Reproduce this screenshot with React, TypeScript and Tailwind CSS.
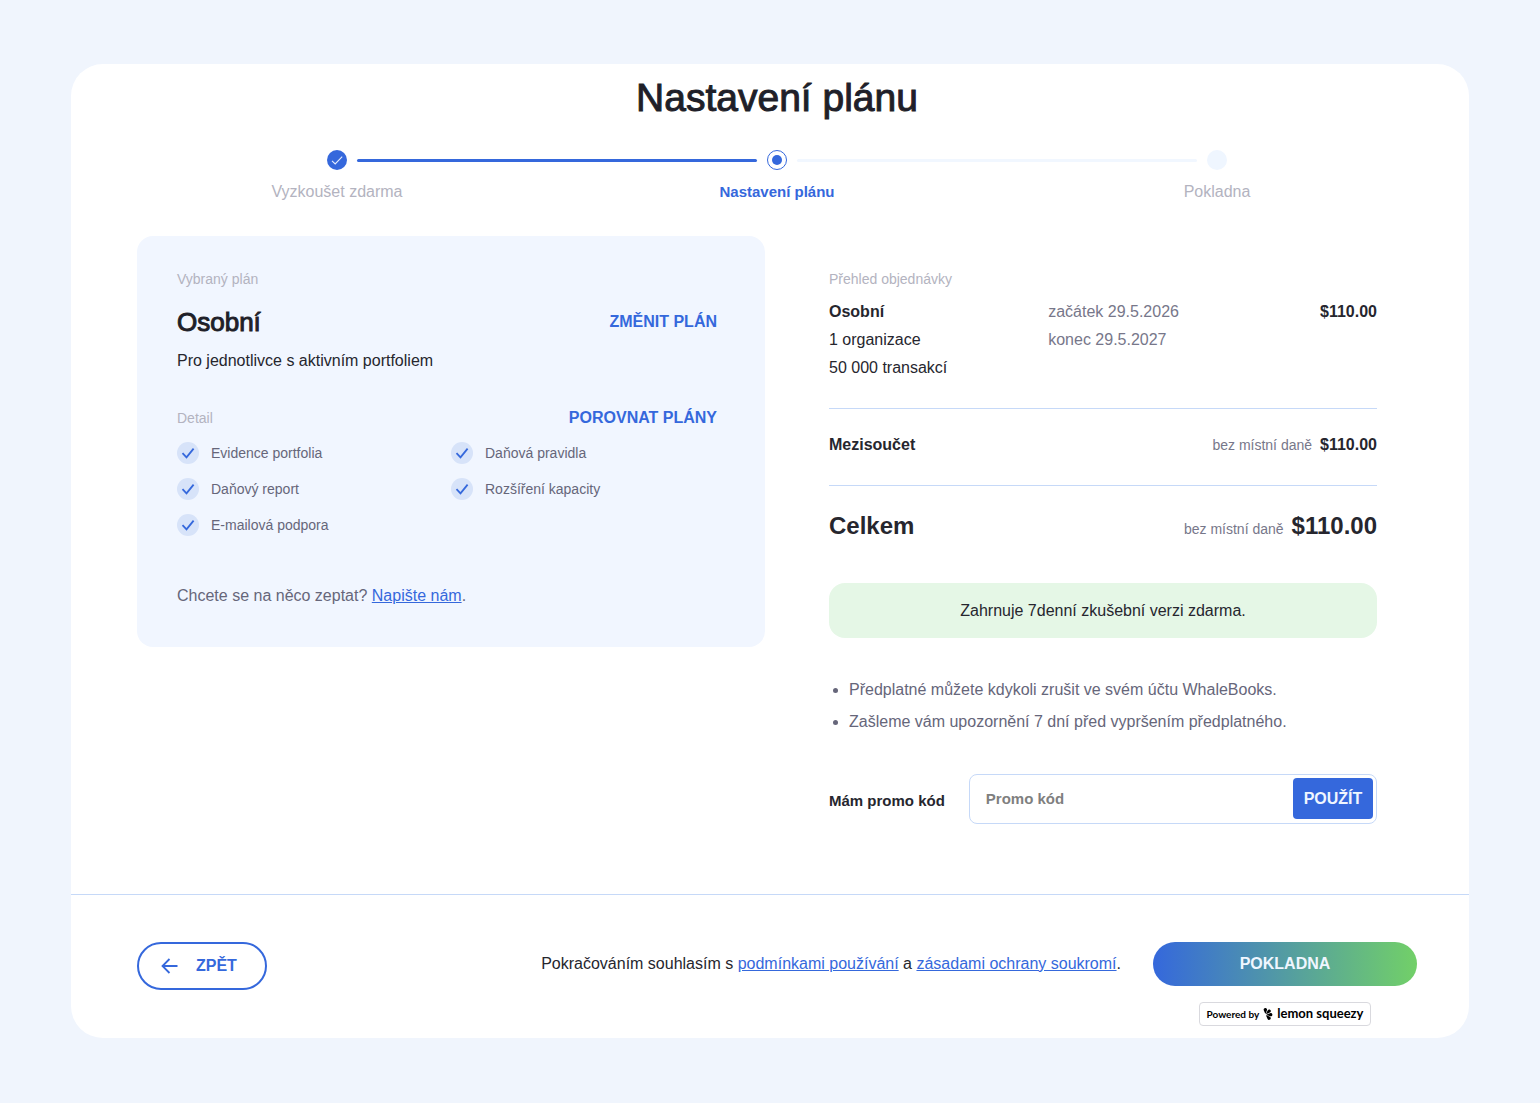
import { useState } from 'react';
import { SiLemonsqueezy } from 'react-icons/si';

const steps = [
  { label: 'Vyzkoušet zdarma', state: 'done' },
  { label: 'Nastavení plánu', state: 'active' },
  { label: 'Pokladna', state: 'next' },
];

const features = [
  'Evidence portfolia',
  'Daňová pravidla',
  'Daňový report',
  'Rozšíření kapacity',
  'E-mailová podpora',
];

function StepDot({ state }: { state: string }) {
  if (state === 'done') {
    return (
      <svg className="size-5 shrink-0" viewBox="0 0 20 20" fill="none">
        <circle cx="10" cy="10" r="10" fill="#3568dc" />
        <path d="M5 10.8l3.2 3.2L15.2 6.6" stroke="#e4ecfd" strokeWidth="1.1" />
      </svg>
    );
  }
  if (state === 'active') {
    return (
      <svg className="size-5 shrink-0" viewBox="0 0 20 20" fill="none">
        <circle cx="10" cy="10" r="9.5" fill="#fff" stroke="#3568dc" />
        <circle cx="10" cy="10" r="5" fill="#3568dc" />
      </svg>
    );
  }
  return <span className="size-5 shrink-0 rounded-full bg-[#eff6ff]" />;
}

function Stepper() {
  return (
    <ol className="-mx-5 mt-7 grid grid-cols-3">
      {steps.map((step, i) => (
        <li key={step.label} className="flex flex-col items-center">
          <div className="flex w-full items-center gap-[10px]">
            <span
              className={`h-[3px] flex-1 ${i === 0 ? '' : i === 1 ? 'rounded-r-sm bg-[#3568dc]' : 'rounded-r-sm bg-[#f1f7ff]'}`}
            />
            <StepDot state={step.state} />
            <span
              className={`h-[3px] flex-1 ${i === 0 ? 'rounded-l-sm bg-[#3568dc]' : i === 1 ? 'rounded-l-sm bg-[#f1f7ff]' : ''}`}
            />
          </div>
          <span
            className={`mt-[11px] leading-[22px] ${step.state === 'active' ? 'text-[15px] font-bold text-[#3568dc]' : 'text-[#b3b3c0]'}`}
          >
            {step.label}
          </span>
        </li>
      ))}
    </ol>
  );
}

function Feature({ text }: { text: string }) {
  return (
    <li className="flex h-[22px] items-center gap-3 text-sm text-[#66667a]">
      <svg className="size-[22px] shrink-0" viewBox="0 0 22 22" fill="none">
        <circle cx="11" cy="11" r="11" fill="#d7e3f9" />
        <path d="M5.5 11.2l4 4.2L16.6 6.6" stroke="#3568dc" strokeWidth="1.8" />
      </svg>
      {text}
    </li>
  );
}

function PlanCard() {
  return (
    <section className="rounded-2xl bg-[#f1f6ff] pt-8 pr-12 pb-10 pl-10">
      <p className="text-sm leading-[22px] text-[#b3b3c0]">Vybraný plán</p>
      <div className="mt-4 flex items-center justify-between">
        <h2 className="text-[26px] leading-8 text-[#1f1f29] [-webkit-text-stroke:1px]">Osobní</h2>
        <button className="leading-[22px] font-bold text-[#3568dc]">ZMĚNIT PLÁN</button>
      </div>
      <p className="mt-3 leading-[22px]">Pro jednotlivce s aktivním portfoliem</p>

      <div className="mt-[35px] flex items-center justify-between leading-[22px]">
        <h3 className="text-sm leading-[22px] text-[#b3b3c0]">Detail</h3>
        <button className="font-bold text-[#3568dc]">POROVNAT PLÁNY</button>
      </div>
      <ul className="mt-[13px] grid grid-cols-2 gap-x-2 gap-y-[14px]">
        {features.map((f) => (
          <Feature key={f} text={f} />
        ))}
      </ul>
      <p className="mt-[49px] leading-[22px] text-[#66667a]">
        Chcete se na něco zeptat? <a href="#kontakt" className="text-[#3568dc] underline">Napište nám</a>.
      </p>
    </section>
  );
}

function OrderSummary() {
  const [code, setCode] = useState('');

  return (
    <section className="pt-8 pr-10">
      <h2 className="text-sm leading-[22px] text-[#b3b3c0]">Přehled objednávky</h2>
      <div className="mt-2 grid grid-cols-5 border-b border-[#c6d9f8] pb-[26px] leading-7">
        <div className="col-span-2">
          <p className="font-bold">Osobní</p>
          <p>1 organizace</p>
          <p>50 000 transakcí</p>
        </div>
        <div className="col-span-2 text-[#77778a]">
          <p>začátek 29.5.2026</p>
          <p>konec 29.5.2027</p>
        </div>
        <p className="text-right font-bold">$110.00</p>
      </div>

      <div className="flex items-baseline justify-between border-b border-[#c6d9f8] pt-[22px] pb-[26px] leading-7 font-bold">
        <span>Mezisoučet</span>
        <span className="flex items-baseline gap-2">
          <span className="text-sm font-normal text-[#77778a]">bez místní daně</span>
          $110.00
        </span>
      </div>

      <div className="flex items-baseline justify-between pt-[22px] text-2xl leading-9 font-bold">
        <span>Celkem</span>
        <span className="flex items-baseline gap-2">
          <span className="text-sm font-normal text-[#77778a]">bez místní daně</span>
          $110.00
        </span>
      </div>

      <p className="mt-[39px] rounded-2xl bg-[#e5f7e6] py-4 text-center leading-[23px]">
        Zahrnuje 7denní zkušební verzi zdarma.
      </p>

      <ul className="mt-9 list-disc pl-5 leading-8 text-[#66667a]">
        <li>Předplatné můžete kdykoli zrušit ve svém účtu WhaleBooks.</li>
        <li>Zašleme vám upozornění 7 dní před vypršením předplatného.</li>
      </ul>

      <form className="mt-9 flex items-center gap-6" onSubmit={(e) => e.preventDefault()}>
        <label htmlFor="promo" className="shrink-0 pt-1 text-[15px] font-bold">
          Mám promo kód
        </label>
        <div className="flex h-[50px] min-w-0 flex-1 rounded-lg border border-[#c6d9f8] p-[3px]">
          <input
            id="promo"
            value={code}
            onChange={(e) => setCode(e.target.value)}
            placeholder="Promo kód"
            className="min-w-0 flex-1 px-[13px] text-[15px] font-bold outline-none placeholder:text-[#7f7f7f]"
          />
          <button className="h-[41px] w-20 rounded bg-[#3568dc] font-bold text-[#eff6ff]">POUŽÍT</button>
        </div>
      </form>
    </section>
  );
}

function Footer() {
  return (
    <footer className="mt-[70px] border-t border-[#c6d9f8] pt-[47px] pr-[52px] pb-3 pl-[66px]">
      <div className="mx-auto flex max-w-[1280px] items-start justify-between">
        <button className="flex h-12 w-[130px] items-center gap-[18px] rounded-full border-2 border-[#3568dc] pl-[22px] font-bold text-[#3568dc]">
          <svg className="h-4 w-[17px]" viewBox="0 0 17 16" fill="none" stroke="currentColor" strokeWidth="1.8">
            <path d="M16.5 8H1.5M8.5 1L1.5 8l7 7" />
          </svg>
          ZPĚT
        </button>
        <div className="flex items-start gap-8">
          <p className="leading-[44px]">
            Pokračováním souhlasím s <a href="#podminky" className="text-[#3568dc] underline">podmínkami používání</a> a{' '}
            <a href="#soukromi" className="text-[#3568dc] underline">zásadami ochrany soukromí</a>.
          </p>
          <div className="flex w-[264px] shrink-0 flex-col items-center gap-4">
            <button className="h-11 w-full rounded-full bg-linear-to-r/srgb from-[#3568dc] to-[#72d068] font-bold text-[#eff6ff]">
              POKLADNA
            </button>
            <a
              href="#lemon-squeezy"
              className="flex h-6 w-[172px] items-center justify-center rounded border border-[#d9d9de] font-[Lato,sans-serif] font-bold whitespace-nowrap text-black"
            >
              <span className="text-[10px]">Powered by</span>
              <SiLemonsqueezy className="mx-[3px] size-3" />
              <span className="text-[13px]">lemon squeezy</span>
            </a>
          </div>
        </div>
      </div>
    </footer>
  );
}

export default function App() {
  return (
    <div className="min-h-screen bg-[#f0f5fd] px-[71px] pt-16 pb-[65px] font-['Liberation_Sans',Arial,sans-serif] text-base text-[#26262e]">
      <div className="rounded-[32px] bg-white">
        <main className="pt-[10px] pr-[52px] pl-[66px]">
          <div className="mx-auto max-w-[1280px]">
            <h1 className="text-center text-[39px] leading-[48px] text-[#1f1f29] [-webkit-text-stroke:1px]">
              Nastavení plánu
            </h1>
            <Stepper />
            <div className="mt-[33px] grid grid-cols-[628fr_588fr] items-start gap-16">
              <PlanCard />
              <OrderSummary />
            </div>
          </div>
        </main>
        <Footer />
      </div>
    </div>
  );
}
